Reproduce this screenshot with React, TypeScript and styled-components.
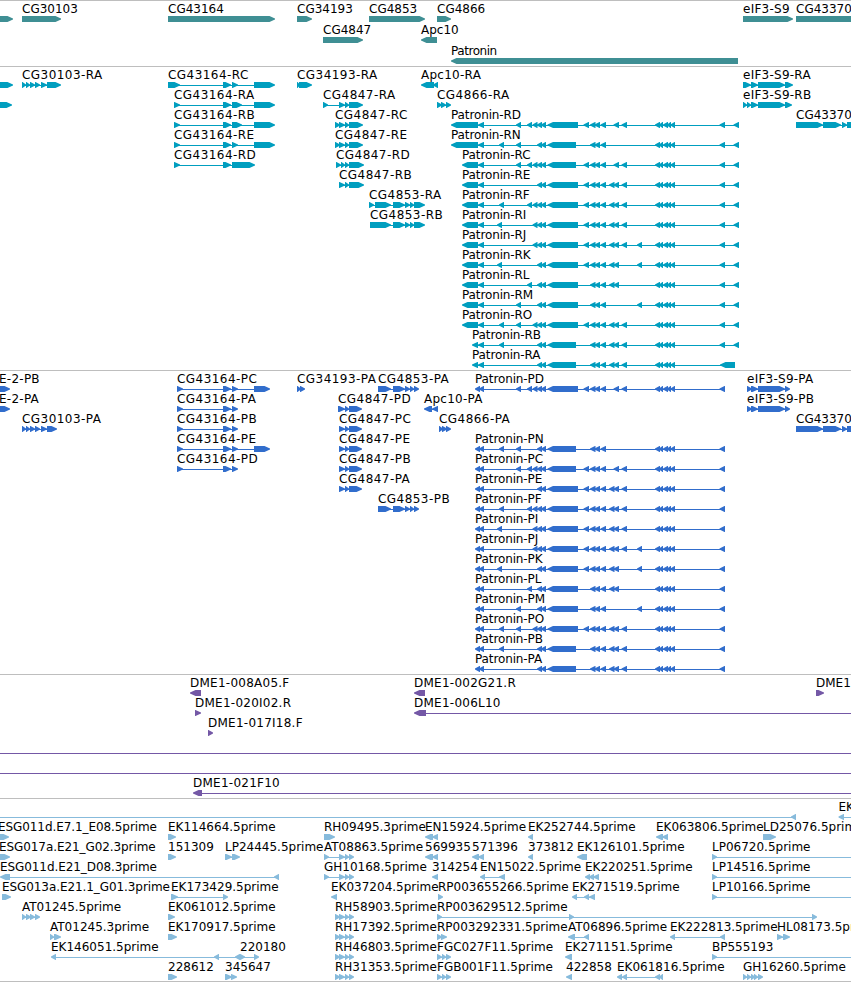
import styled, { createGlobalStyle } from 'styled-components';

type Strand = 'f' | 'r'

interface IFeature {
  label?: string
  x: number
  strand: Strand
  // "from-to" pairs separated by spaces, empty for a plain line
  exons: string
  lineTo?: number
}

interface ITrack {
  name: string
  color: string
  height: number
  laneHeight: number
  lanes: IFeature[][]
}

const VIEW_WIDTH = 851

const fwd = (label: string, x: number, exons: string, lineTo?: number): IFeature => ({ label, x, strand: 'f', exons, lineTo })
const rev = (label: string, x: number, exons: string, lineTo?: number): IFeature => ({ label, x, strand: 'r', exons, lineTo })

// exons shared by the Patronin isoforms
const PATRONIN_EXONS: Record<string, string> = {
  A: '499-504',
  B: '497-502',
  C: '516-521',
  D: '527-532',
  E: '532.5-537.5',
  F: '537-542',
  G: '541-546',
  H: '547.5-578',
  h: '547.5-576',
  I: '583.5-589',
  J: '590-595.5',
  K: '594.5-600',
  M: '600.5-606',
  N: '609-614.5',
  O: '613.5-619',
  Q: '621.5-627',
  R: '637-642',
}
const PATRONIN_TAIL = '655-660 659-663 663-668 667-671 670.5-675'

const ISOFORMS: Record<string, string> = {
  D: 'CDEFGHIJKMOQ',
  N: 'ACFGhJKM',
  C: 'CDEFGhIJKMOQ',
  E: 'FGHIJKMNOQ',
  F: 'ADEFGHIJKMNOQ',
  I: 'BEFGHIJKMNOQ',
  J: 'EFGHIJKMNOQR',
  K: 'BFGHIJKMNOR',
  L: 'DFGHJKMNO',
  M: 'CFGHJKMR',
  O: 'ACEFGHIJKMNOQ',
  B: 'AFGhJKMNOQ',
  A: 'FGhJKMNOQ',
}

const isoformExons = (id: string) => ISOFORMS[id].split('').map((key) => PATRONIN_EXONS[key]).join(' ')

const patroninR = (id: string, x: number) => {
  const end = id === 'A' ? '720-735' : '719.5-725 733.5-739'
  return rev(`Patronin-R${id}`, x, `${x}-478 478-484 ${isoformExons(id)} ${PATRONIN_TAIL} ${end}`)
}

const patroninP = (id: string) =>
  rev(`Patronin-P${id}`, 475, `475-480 479-484 ${isoformExons(id)} ${PATRONIN_TAIL} 719.5-725`)

const CG4847 = '339-345 345-349 349-363'
const CG4847P = '339-345 345-349 349-362'
const CG4853 = '393-405 405-410 410-414 414-425'
const CG4853P = '378-391 393-405 405-410 410-414 414-419'
const CG43370 = '796-823 823-841 842-847 847-862'
const CG43164P = '177-183 223-231 232-238'
const RH = '335-340 339-345 345-349 349-354'

const genes: IFeature[][] = [
  [
    fwd('', 0, '-5-13'),
    fwd('CG30103', 22, '22-61'),
    fwd('CG43164', 168, '168-275'),
    fwd('CG34193', 297, '297-312'),
    fwd('CG4853', 369, '369-425'),
    fwd('CG4866', 437, '437-451'),
    fwd('eIF3-S9', 743, '743-793'),
    fwd('CG43370', 796, '796-862'),
  ],
  [
    fwd('CG4847', 323, '323-363'),
    rev('Apc10', 421, '421-437'),
  ],
  [rev('Patronin', 451, '451-738')],
]

const transcripts: IFeature[][] = [
  [
    fwd('', 0, '-5-13'),
    fwd('CG30103-RA', 22, '22-26 26-30 30-35 35-40 41-47 47-61'),
    fwd('CG43164-RC', 168, '168-180 223-231 232-238 254-275'),
    fwd('CG34193-RA', 297, '297-300 299-312'),
    rev('Apc10-RA', 421, '421-434 433-438'),
    fwd('eIF3-S9-RA', 743, '743-751 751-758 758-785 785-793'),
  ],
  [
    fwd('', 0, '-5-12'),
    fwd('CG43164-RA', 174, '174-180 223-231 232-242 254-275'),
    fwd('CG4847-RA', 323, `323-328 ${CG4847}`),
    fwd('CG4866-RA', 437, '437-442 441-446 446-451'),
    fwd('eIF3-S9-RB', 743, '743-747 747-751 751-758 758-785 785-792'),
  ],
  [
    fwd('CG43164-RB', 174, '174-180 223-231 232-242 254-275'),
    fwd('CG4847-RC', 335, `335-340 ${CG4847}`),
    patroninR('D', 451),
    fwd('CG43370', 796, CG43370),
  ],
  [
    fwd('CG43164-RE', 174, '174-180 223-231 232-238 254-275'),
    fwd('CG4847-RE', 335, `335-340 ${CG4847}`),
    patroninR('N', 451),
  ],
  [
    fwd('CG43164-RD', 174, '174-180 223-231 232-255'),
    fwd('CG4847-RD', 336, '336-341 341-345 345-349 349-364'),
    patroninR('C', 462),
  ],
  [fwd('CG4847-RB', 339, '339-345 345-349 349-364'), patroninR('E', 462)],
  [fwd('CG4853-RA', 369, `369-374 375-391 ${CG4853}`), patroninR('F', 462)],
  [fwd('CG4853-RB', 370, `370-391 ${CG4853}`), patroninR('I', 462)],
  [patroninR('J', 462)],
  [patroninR('K', 462)],
  [patroninR('L', 462)],
  [patroninR('M', 462)],
  [patroninR('O', 462)],
  [patroninR('B', 472)],
  [patroninR('A', 472)],
]

const proteins: IFeature[][] = [
  [
    fwd('E-2-PB', -1, '-5-10'),
    fwd('CG43164-PC', 177, `${CG43164P} 254-270`),
    fwd('CG34193-PA', 297, '297-301 300-305'),
    fwd('CG4853-PA', 378, CG4853P),
    patroninP('D'),
    fwd('eIF3-S9-PA', 747, '747-752 751-758 758-785 785-790'),
  ],
  [
    fwd('E-2-PA', -1, '-5-10'),
    fwd('CG43164-PA', 177, CG43164P),
    fwd('CG4847-PD', 338, '338-345 345-349 349-362'),
    rev('Apc10-PA', 424, '424-432 432-438'),
    fwd('eIF3-S9-PB', 747, '747-752 751-758 758-785 785-790'),
  ],
  [
    fwd('CG30103-PA', 22, '22-26 26-30 30-35 35-40 41-47 47-57'),
    fwd('CG43164-PB', 177, CG43164P),
    fwd('CG4847-PC', 339, CG4847P),
    fwd('CG4866-PA', 439, '439-443 442-447 446-451'),
    fwd('CG43370', 796, CG43370),
  ],
  [
    fwd('CG43164-PE', 177, `${CG43164P} 254-270`),
    fwd('CG4847-PE', 339, CG4847P),
    patroninP('N'),
  ],
  [
    fwd('CG43164-PD', 177, CG43164P),
    fwd('CG4847-PB', 339, CG4847P),
    patroninP('C'),
  ],
  [fwd('CG4847-PA', 339, CG4847P), patroninP('E')],
  [fwd('CG4853-PB', 378, CG4853P), patroninP('F')],
  [patroninP('I')],
  [patroninP('J')],
  [patroninP('K')],
  [patroninP('L')],
  [patroninP('M')],
  [patroninP('O')],
  [patroninP('B')],
  [patroninP('A')],
]

const clones: IFeature[][] = [
  [
    rev('DME1-008A05.F', 190, '190-201'),
    rev('DME1-002G21.R', 414, '414-425'),
    fwd('DME1', 816, '816-824'),
  ],
  [
    fwd('DME1-020I02.R', 195, '195-201'),
    rev('DME1-006L10', 414, '414-426', 860),
  ],
  [fwd('DME1-017I18.F', 208, '208-213')],
  [fwd('', -5, '', 860)],
  [fwd('', -5, '', 860)],
  [rev('DME1-021F10', 193, '193-202', 860)],
]

const ests: IFeature[][] = [
  [
    rev('', 0, '-20--10 791-796'),
    rev('EK', 838.5, '838.5-844', 860),
  ],
  [
    fwd('ESG011d.E7.1_E08.5prime', -2, '-3-9'),
    fwd('EK114664.5prime', 168, '168-176'),
    fwd('RH09495.3prime', 324, '324-335'),
    rev('EN15924.5prime', 425, '425-433 432-438'),
    rev('EK252744.5prime', 528, '528-533'),
    rev('EK063806.5prime', 656, '656-663 662-668'),
    fwd('LD25076.5prime', 763, '763-776'),
  ],
  [
    fwd('ESG017a.E21_G02.3prime', -1, '-3-10'),
    fwd('151309', 168, '168-176'),
    fwd('LP24445.5prime', 225, '225-232 232-240'),
    fwd('AT08863.5prime', 324, '324-329 339-345 345-349 349-354'),
    rev('569935', 425, '425-433 432-438'),
    rev('571396', 472, '472-479 478-484'),
    rev('373812', 528, '528-533'),
    rev('EK126101.5prime', 577, '577-587'),
    fwd('LP06720.5prime', 712, '712-717', 860),
  ],
  [
    rev('ESG011d.E21_D08.3prime', 0, '0-10 274-279'),
    fwd('GH10168.5prime', 324, '324-329 339-345 345-349 349-354'),
    rev('314254', 432, '432-438'),
    rev('EN15022.5prime', 480, '480-485 499-505'),
    rev('EK220251.5prime', 585, '585-590 589-594 593-599'),
    fwd('LP14516.5prime', 712, '712-717', 860),
  ],
  [
    fwd('ESG013a.E21.1_G01.3prime', 2, '2-11'),
    fwd('EK173429.5prime', 171, '171-178 223-228'),
    rev('EK037204.5prime', 331, '331-337'),
    fwd('RP003655266.5prime', 438, '438-443'),
    rev('EK271519.5prime', 572, '572-577 584-589 589-595'),
    fwd('LP10166.5prime', 712, '712-717', 860),
  ],
  [
    fwd('AT01245.5prime', 22, '22-26 26-31 30-35 35-40'),
    fwd('EK061012.5prime', 168, '168-175'),
    fwd('RH58903.5prime', 335, RH),
    fwd('RP003629512.5prime', 437, '437-442 569-574 812-817'),
  ],
  [
    fwd('AT01245.3prime', 50, '50-54 54-61'),
    fwd('EK170917.5prime', 168, '168-177'),
    fwd('RH17392.5prime', 335, RH),
    fwd('RP003292331.5prime', 437, '437-442 441-447'),
    rev('AT06896.5prime', 568, '568-575 584-589'),
    rev('EK222813.5prime', 670, '670-675 720-725'),
    fwd('HL08173.5prime', 777, '777-783 783-790'),
  ],
  [
    rev('EK146051.5prime', 51, '51-56 214-219 235-240'),
    fwd('220180', 240, '240-245 254-259'),
    fwd('RH46803.5prime', 335, RH),
    fwd('FGC027F11.5prime', 437, '437-442 442-446 446-451'),
    rev('EK271151.5prime', 565, '565-572'),
    fwd('BP555193', 712, '712-717', 860),
  ],
  [
    fwd('228612', 168, '168-177'),
    fwd('345647', 225, '225-232 231-237'),
    fwd('RH31353.5prime', 335, RH),
    fwd('FGB001F11.5prime', 437, '437-442 442-446 446-451'),
    rev('422858', 566, '566-572'),
    rev('EK061816.5prime', 617, '617-622 622-627 655-660 659-663'),
    fwd('GH16260.5prime', 743, '743-747 747-751 751-755 754-758 758-763'),
  ],
]

const tracks: ITrack[] = [
  { name: 'genes', color: '#3f8f94', height: 66, laneHeight: 21, lanes: genes },
  { name: 'transcripts', color: '#009ebf', height: 304, laneHeight: 20, lanes: transcripts },
  { name: 'proteins', color: '#316dcc', height: 304, laneHeight: 20, lanes: proteins },
  { name: 'clones', color: '#7458a6', height: 124, laneHeight: 20, lanes: clones },
  { name: 'ests', color: '#87bbdc', height: 183, laneHeight: 20, lanes: ests },
]

const parseExons = (exons: string) =>
  [...exons.matchAll(/(-?[\d.]+)-(-?[\d.]+)/g)].map((m) => [Number(m[1]), Number(m[2])])

const arrow = (from: number, to: number, strand: Strand) => {
  const tip = Math.min(5.5, to - from - 0.5)
  return strand === 'f'
    ? `${from},0 ${to - tip},0 ${to},2.5 ${to},3.5 ${to - tip},6 ${from},6`
    : `${to},0 ${from + tip},0 ${from},2.5 ${from},3.5 ${from + tip},6 ${to},6`
}

const labelSpacing = (label: string) => {
  if (label === 'Patronin') return -0.45
  if (label.startsWith('Patronin')) return -0.12
  if (label.startsWith('ESG')) return -0.08
  if (!label.includes('-')) return 0
  return label.startsWith('CG') ? 0.45 : 0.25
}

function Feature({ x, strand, exons, lineTo }: IFeature) {
  const spans = parseExons(exons)
  const start = spans.length ? spans[0][0] : x
  const end = lineTo ?? spans[spans.length - 1][1]
  const hasLine = spans.length > 1 || lineTo !== undefined
  return (
    <g>
      {hasLine && <rect x={start + 1} y={3} width={end - start - 2} height={1} />}
      {spans.map(([from, to]) => (
        <polygon key={from} points={arrow(from, to, strand)} />
      ))}
    </g>
  );
}

function Track({ track }: { track: ITrack }) {
  return (
    <TrackBlock $height={track.height}>
      {track.lanes.map((lane, i) => (
        <Lane key={i} $height={track.laneHeight}>
          <Labels>
            {lane.filter((f) => f.label).map((f) => (
              <Label key={f.label} $spacing={labelSpacing(f.label!)} style={{ left: f.x }}>{f.label}</Label>
            ))}
          </Labels>
          <Glyphs $color={track.color} width={VIEW_WIDTH} height={6}>
            {lane.map((f, n) => <Feature key={n} {...f} />)}
          </Glyphs>
        </Lane>
      ))}
    </TrackBlock>
  );
}

function App() {
  return (
    <Browser>
      <GlobalStyle />
      {tracks.map((track) => <Track key={track.name} track={track} />)}
    </Browser>
  );
}

export default App;

const GlobalStyle = createGlobalStyle`
  body {
    margin: 0;
    background: #fff;
    overflow: hidden;
  }
`;

const Browser = styled.div`
  display: flex;
  flex-direction: column;
  width: ${VIEW_WIDTH}px;
  height: 981px;
  border-bottom: 1px solid #bebebe;
  overflow: hidden;
  color: #000;
  font-family: 'DejaVu Sans', sans-serif;
  font-size: 12px;
`;

const TrackBlock = styled.div<{ $height: number }>`
  display: flex;
  flex-direction: column;
  flex-shrink: 0;
  box-sizing: border-box;
  height: ${({ $height }) => $height}px;
  border-top: 1px solid #bebebe;
`;

const Lane = styled.div<{ $height: number }>`
  display: flex;
  flex-direction: column;
  flex-shrink: 0;
  height: ${({ $height }) => $height}px;
`;

const Labels = styled.div`
  position: relative;
  flex-shrink: 0;
  height: 15px;
`;

/* placed by its coordinate on the sequence */
const Label = styled.span<{ $spacing: number }>`
  position: absolute;
  top: 1px;
  line-height: 14px;
  white-space: nowrap;
  letter-spacing: ${({ $spacing }) => $spacing}px;
`;

const Glyphs = styled.svg<{ $color: string }>`
  display: block;
  flex-shrink: 0;
  fill: ${({ $color }) => $color};
`;
